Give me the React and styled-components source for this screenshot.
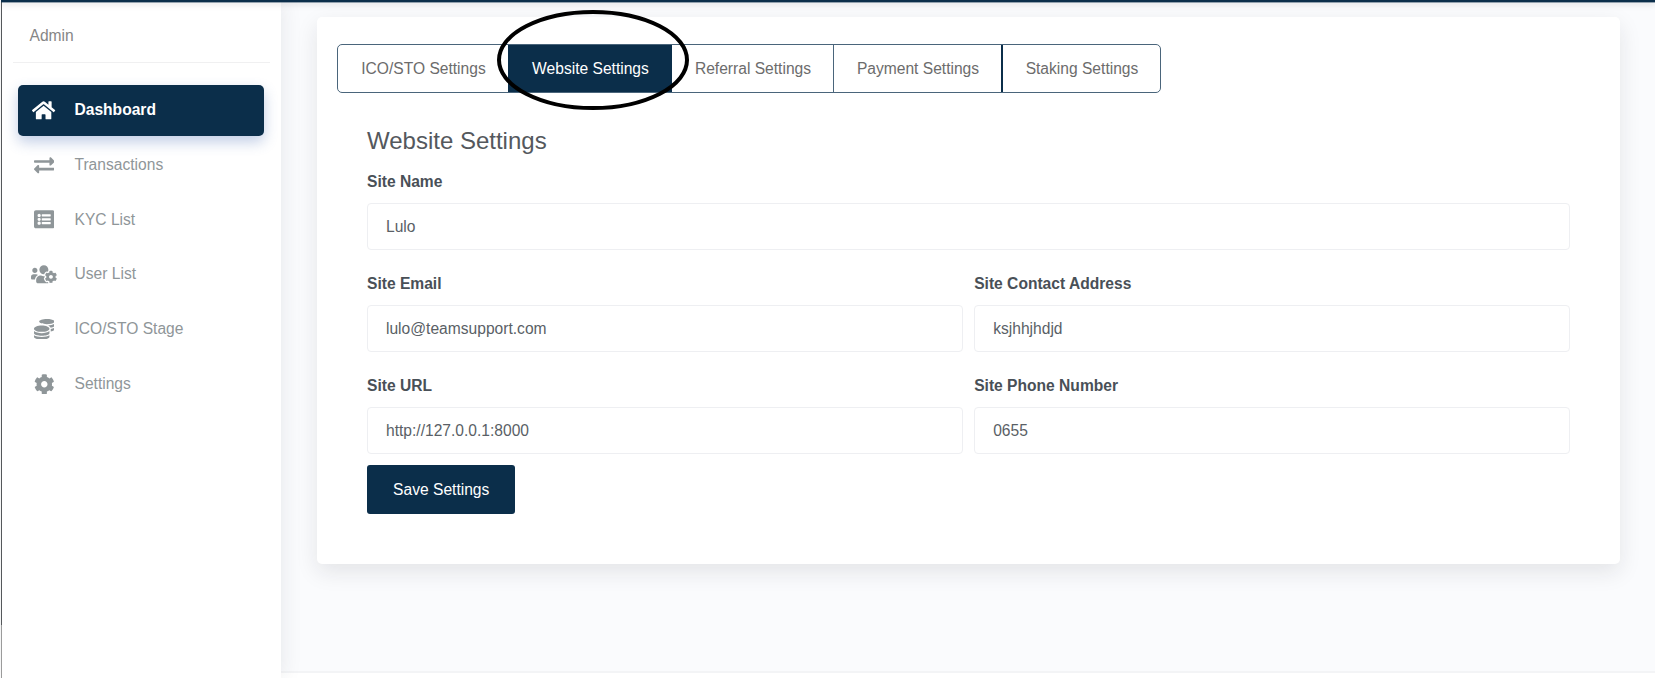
import React from "react";
import styled, { createGlobalStyle, css } from "styled-components";
import { FaHome, FaExchangeAlt, FaListAlt, FaUsersCog, FaCoins, FaCog } from "react-icons/fa";

const navy = "#0b2e4a";

const GlobalStyle = createGlobalStyle`
  *, *::before, *::after { box-sizing: border-box; }
  body {
    margin: 0;
    background: #fff;
    font-family: "Liberation Sans", Arial, sans-serif;
    font-size: 15.6px;
    line-height: 24px;
    color: #495057;
    overflow: hidden;
  }
`;

const Page = styled.div`
  display: flex;
  flex-direction: column;
  width: 1655px;
  height: 678px;
  overflow: hidden;
`;

const TopBar = styled.header`
  flex: none;
  height: 2px;
  margin-left: 1px;
  background: ${navy};
  box-shadow: 0 1px 0 rgba(11, 46, 74, 0.4), 0 2px 6px rgba(0, 0, 0, 0.22);
  z-index: 3;
`;

const Columns = styled.div`
  flex: 1;
  display: flex;
  min-height: 0;
`;

const Edge = styled.div`
  flex: none;
  width: 1px;
  margin-left: 1px;
  background: linear-gradient(#55585b 623px, #9b9b9b 623px);
  z-index: 2;
`;

const Sidebar = styled.aside`
  flex: none;
  width: 279.4px;
  background: #fff;
  box-shadow: 0 0 20px rgba(40, 45, 60, 0.1);
  z-index: 1;
`;

const Role = styled.div`
  margin: 0 11px;
  height: 61px;
  padding: 22px 0 0 16.5px;
  border-bottom: 1px solid #f0f0f1;
  color: #868686;
`;

const Menu = styled.nav`
  display: flex;
  flex-direction: column;
  gap: 3.7px;
  padding: 22.4px 17px 0 16.4px;
`;

const MenuItem = styled.a`
  display: flex;
  align-items: center;
  height: 51px;
  padding-left: 11.6px;
  border-radius: 5px;
  color: #8f9699;
  ${(p) =>
    p.$active &&
    css`
      background: ${navy};
      color: #fff;
      font-weight: 700;
      box-shadow: 0 6px 14px rgba(70, 105, 180, 0.33);
    `}
`;

const MenuIcon = styled.span`
  display: flex;
  justify-content: center;
  width: 28px;
  margin-right: 16.5px;
  padding-bottom: 1px;
  font-size: 20.6px;

  svg {
    flex: none;
    width: ${(p) => p.$ratio}em;
    height: 1em;
  }
`;

const MenuText = styled.span`
  padding-bottom: 1.2px;
`;

const Main = styled.main`
  flex: 1;
  display: flex;
  flex-direction: column;
  min-width: 0;
`;

const Content = styled.div`
  height: 669px;
  padding: 14.5px 34.6px 0 35.6px;
  background: #fafbfd;
`;

const Footer = styled.footer`
  flex: 1;
  border-top: 2px solid #f3f4f6;
  background: #fff;
`;

const Card = styled.section`
  height: 547.5px;
  padding: 27.5px 20px 0;
  border-radius: 5px;
  background: #fff;
  box-shadow: 0 8px 22px rgba(30, 32, 40, 0.1);
`;

const Tabs = styled.div`
  position: relative;
  display: flex;
  width: 824px;
  height: 49px;
  border: 1px solid #4a657b;
  border-radius: 5px;
`;

const Tab = styled.button`
  flex: none;
  width: ${(p) => p.$width}px;
  padding: 1px 0 0 1px;
  border: 0;
  border-left: ${(p) => p.$rule || 0}px solid ${(p) => (p.$rule > 1 ? navy : "#4a657b")};
  background: ${(p) => (p.$active ? navy : "transparent")};
  color: ${(p) => (p.$active ? "#fff" : "#6c6c6c")};
  font: inherit;
`;

const Marker = styled.svg`
  position: absolute;
  left: 159px;
  top: -35px;
  pointer-events: none;
`;

const Form = styled.form`
  display: grid;
  grid-template-columns: 1fr 1fr;
  column-gap: 11px;
  margin: 0 30px;
`;

const Title = styled.h4`
  grid-column: 1 / -1;
  margin: 31px 0 1px;
  color: #54585d;
  font-size: 24px;
  font-weight: 400;
  line-height: 34px;
`;

const Field = styled.label`
  grid-column: ${(p) => (p.$wide ? "1 / -1" : "auto")};
  display: flex;
  flex-direction: column;
  height: 102px;
  padding-top: 11px;
`;

const FieldName = styled.span`
  height: 33px;
  font-weight: 700;
`;

const Input = styled.input`
  width: 100%;
  height: 47px;
  padding: 1px 18px 0;
  border: 1px solid #eeeff2;
  border-radius: 4px;
  background: #fff;
  color: #5a5f66;
  font: inherit;
  outline: none;
`;

const SaveButton = styled.button`
  justify-self: start;
  width: 148.5px;
  height: 49px;
  padding: 1px 0 0;
  border: 0;
  border-radius: 3px;
  background: ${navy};
  color: #fff;
  font: inherit;
`;

const menu = [
  { icon: FaHome, ratio: 1.125, text: "Dashboard", active: true },
  { icon: FaExchangeAlt, ratio: 1, text: "Transactions" },
  { icon: FaListAlt, ratio: 1, text: "KYC List" },
  { icon: FaUsersCog, ratio: 1.25, text: "User List" },
  { icon: FaCoins, ratio: 1, text: "ICO/STO Stage" },
  { icon: FaCog, ratio: 1, text: "Settings" },
];

const tabs = [
  { text: "ICO/STO Settings", width: 170 },
  { text: "Website Settings", width: 164, active: true },
  { text: "Referral Settings", width: 161 },
  { text: "Payment Settings", width: 168, rule: 1 },
  { text: "Staking Settings", width: 159, rule: 2 },
];

const fields = [
  { name: "Site Name", value: "Lulo", wide: true },
  { name: "Site Email", value: "lulo@teamsupport.com" },
  { name: "Site Contact Address", value: "ksjhhjhdjd" },
  { name: "Site URL", value: "http://127.0.0.1:8000" },
  { name: "Site Phone Number", value: "0655" },
];

export default function App() {
  return (
    <Page>
      <GlobalStyle />
      <TopBar />
      <Columns>
        <Edge />
        <Sidebar>
          <Role>Admin</Role>
          <Menu>
            {menu.map(({ icon: Icon, ratio, text, active }) => (
              <MenuItem key={text} $active={active}>
                <MenuIcon $ratio={ratio}>
                  <Icon />
                </MenuIcon>
                <MenuText>{text}</MenuText>
              </MenuItem>
            ))}
          </Menu>
        </Sidebar>
        <Main>
          <Content>
            <Card>
              <Tabs>
                {tabs.map((t) => (
                  <Tab key={t.text} type="button" $width={t.width} $active={t.active} $rule={t.rule}>
                    {t.text}
                  </Tab>
                ))}
                <Marker width="192" height="100" viewBox="0 0 192 100">
                  <ellipse cx="96" cy="50" rx="94" ry="48" fill="none" stroke="#000" strokeWidth="4" />
                </Marker>
              </Tabs>
              <Form>
                <Title>Website Settings</Title>
                {fields.map((f) => (
                  <Field key={f.name} $wide={f.wide}>
                    <FieldName>{f.name}</FieldName>
                    <Input type="text" defaultValue={f.value} />
                  </Field>
                ))}
                <SaveButton type="button">Save Settings</SaveButton>
              </Form>
            </Card>
          </Content>
          <Footer />
        </Main>
      </Columns>
    </Page>
  );
}
